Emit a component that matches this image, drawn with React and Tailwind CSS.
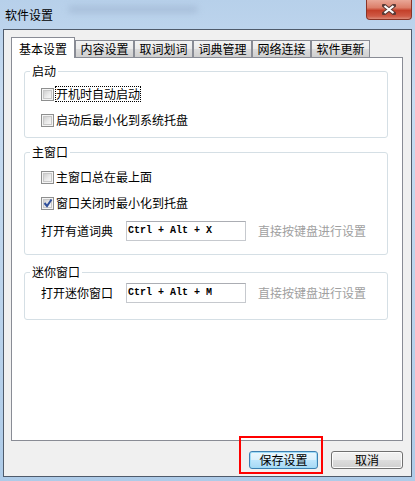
const cjk = { fontFamily: '"Noto Sans CJK SC", "Liberation Sans", sans-serif' };

function CheckBox({ checked }) {
  return (
    <span className="flex h-[13px] w-[13px] shrink-0 items-center justify-center border border-[#8e8f8f] bg-[#f4f4f4]">
      <span className="relative h-[9px] w-[9px] border border-[#c8c8c8] bg-[linear-gradient(135deg,#cfcfcf,#ececec_60%,#f6f6f6)]">
        {checked && (
          <svg className="absolute left-[-1px] top-[-2px]" width="10" height="10" viewBox="0 0 10 10">
            <path d="M1.5 5 L4 8 L8.5 1.5" fill="none" stroke="#2f4f9a" strokeWidth="2" />
          </svg>
        )}
      </span>
    </span>
  );
}

function CheckRow({ label, checked, focused, className = '' }) {
  return (
    <div className={`flex h-[16px] items-center gap-[2px] pl-[16px] ${className}`}>
      <CheckBox checked={checked} />
      <span
        className={`text-[12px] leading-[14px] text-black ${focused ? 'outline outline-1 outline-dotted outline-black' : ''}`}
      >
        {label}
      </span>
    </div>
  );
}

function HotkeyRow({ label, value, className = '' }) {
  return (
    <div className={`flex h-[20px] items-center pl-[16px] ${className}`}>
      <span className="w-[85px] text-[12px] leading-[16px] text-black">{label}</span>
      <div className="flex h-[20px] w-[120px] items-center border border-[#c6c9ce] border-t-[#abadb3] bg-white pl-[1px]">
        <span
          className="text-[10px] font-bold leading-[12px] text-black"
          style={{ fontFamily: '"Liberation Mono", monospace' }}
        >
          {value}
        </span>
      </div>
      <span className="ml-[12px] text-[12px] leading-[16px] text-[#a0a0a0]">直接按键盘进行设置</span>
    </div>
  );
}

function Group({ title, className = '', children }) {
  return (
    <fieldset className={`ml-[12px] mr-[14px] rounded-[3px] border border-[#d5dfe5] ${className}`}>
      <legend className="ml-[5px] px-[2px] text-[12px] leading-[16px] text-black">{title}</legend>
      {children}
    </fieldset>
  );
}

const tabs = ['内容设置', '取词划词', '词典管理', '网络连接', '软件更新'];

export default function App() {
  return (
    <div
      className="relative flex h-[481px] w-[415px] flex-col overflow-hidden bg-[linear-gradient(180deg,#b7d0ea,#c8dcf1_20%,#bcd4ec_60%,#aecbe8)]"
      style={cjk}
    >
      {/* title bar */}
      <div className="relative flex h-[29px] items-start justify-between">
        <span className="ml-[5px] mt-[7px] text-[12px] leading-[16px] text-black">软件设置</span>
        <div className="absolute left-[68px] top-[6px] h-[7px] w-[130px] rounded-full bg-[#9db3cf] opacity-60 blur-[3px]" />
        <button className="mr-[3px] flex h-[20px] w-[46px] items-center justify-center rounded-b-[4px] border border-t-0 border-[#8a3426] bg-[linear-gradient(180deg,#e9a797,#dc7f6a_40%,#c4402a_55%,#cf5a45_85%,#dc8a78)]">
          <svg width="14" height="11" viewBox="0 0 14 11">
            <path d="M2 1.5 L12 9.5 M12 1.5 L2 9.5" stroke="#5a3a36" strokeWidth="4" strokeLinecap="square" />
            <path d="M2.5 2 L11.5 9 M11.5 2 L2.5 9" stroke="#ffffff" strokeWidth="2.2" />
          </svg>
        </button>
      </div>

      {/* client area */}
      <div className="mx-[3px] mb-[4px] flex flex-1 flex-col border border-[#4f5b6b] bg-[#f0f0f0] pl-[7px] pr-[8px] pt-[7px]">
        {/* tabs */}
        <div className="flex items-end">
          <div className="relative z-10 mb-[-1px] flex h-[21px] w-[64px] items-center justify-center border border-b-0 border-[#898c95] bg-white pt-[1px] text-[12px] leading-[16px] text-black">
            基本设置
          </div>
          {tabs.map((t) => (
            <div
              key={t}
              className="flex h-[17px] w-[59px] items-center justify-center border border-b-0 border-[#898c95] bg-[linear-gradient(180deg,#f3f3f3,#ebebeb_50%,#dddddd_50%,#cfcfcf)] text-[12px] leading-[16px] text-black"
            >
              {t}
            </div>
          ))}
        </div>

        {/* panel */}
        <div className="flex flex-1 flex-col border border-[#898c95] bg-white">
          <Group title="启动" className="mt-[5px] pb-[9px]">
            <CheckRow label="开机时自动启动" focused className="mt-[7px]" />
            <CheckRow label="启动后最小化到系统托盘" className="mt-[10px]" />
          </Group>

          <Group title="主窗口" className="mt-[6px] pb-[13px]">
            <CheckRow label="主窗口总在最上面" className="mt-[9px]" />
            <CheckRow label="窗口关闭时最小化到托盘" checked className="mt-[10px]" />
            <HotkeyRow label="打开有道词典" value="Ctrl + Alt + X" className="mt-[10px]" />
          </Group>

          <Group title="迷你窗口" className="mt-[9px] pb-[16px]">
            <HotkeyRow label="打开迷你窗口" value="Ctrl + Alt + M" className="mt-[3px]" />
          </Group>
        </div>

        {/* buttons */}
        <div className="flex justify-end gap-[13px] pb-[7px] pt-[10px]">
          <button className="flex h-[18px] w-[69px] items-center justify-center rounded-[3px] border border-[#3c7fb1] bg-[linear-gradient(180deg,#eaf6fd,#d9f0fc_50%,#bee6fd_50%,#a7d9f5)] text-[12px] leading-[16px] text-black shadow-[inset_0_0_0_1px_#9fdcf7]">
            保存设置
          </button>
          <button className="flex h-[18px] w-[72px] items-center justify-center rounded-[3px] border border-[#707070] bg-[linear-gradient(180deg,#f2f2f2,#ebebeb_50%,#dddddd_50%,#cfcfcf)] text-[12px] leading-[16px] text-black shadow-[inset_0_0_0_1px_#fcfcfc]">
            取消
          </button>
        </div>
      </div>

      {/* red annotation box */}
      <div className="absolute left-[239px] top-[436px] h-[38px] w-[84px] border-2 border-[#ff0000]" />
    </div>
  );
}
